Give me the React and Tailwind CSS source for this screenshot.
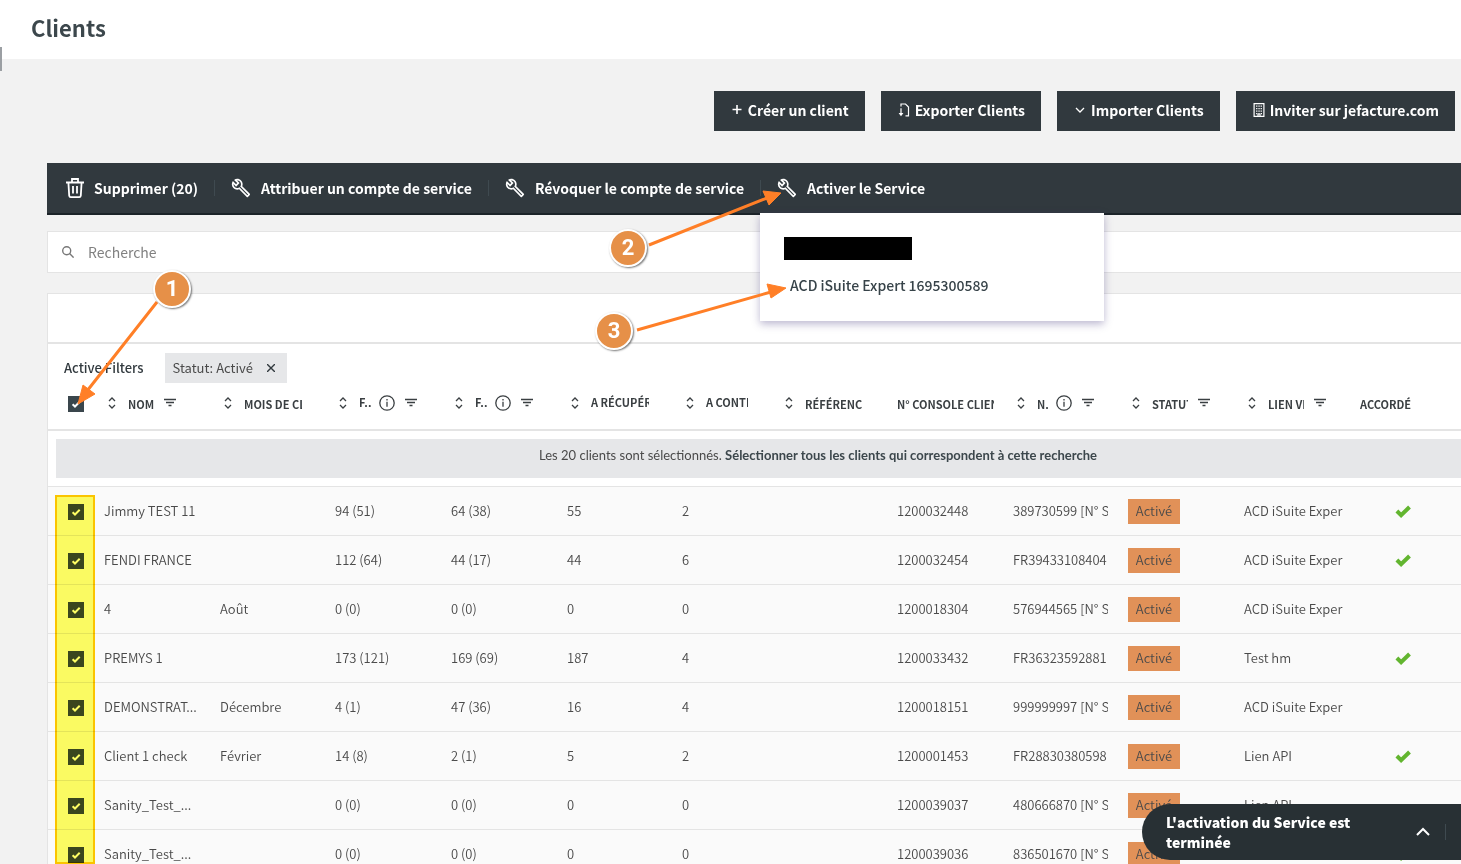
import { useState } from "react";
import { MdOutlineBuild } from "react-icons/md";

const ACCOUNT = "ACD iSuite Expert 1695300589";

const COLUMNS = [
  { id: "nom", label: "Nom", width: "w-[116px]", box: "", sort: true, filter: true },
  { id: "mois", label: "Mois de clôture", width: "w-[115px]", box: "w-[58px]", sort: true },
  { id: "f1", label: "F...", width: "w-[116px]", box: "w-3", sort: true, info: true, filter: true, raised: true },
  { id: "f2", label: "F...", width: "w-[116px]", box: "w-3", sort: true, info: true, filter: true, raised: true },
  { id: "recup", label: "A récupérer", width: "w-[115px]", box: "w-[58px]", sort: true, raised: true },
  { id: "controler", label: "A contrôler", width: "w-[99px]", box: "w-[42px]", sort: true, raised: true },
  { id: "reference", label: "Référence", width: "w-[116px]", box: "w-[58px]", sort: true },
  { id: "console", label: "N° console client", width: "w-[116px]", box: "w-[97px]" },
  { id: "numero", label: "N...", width: "w-[115px]", box: "w-[11px]", sort: true, info: true, filter: true },
  { id: "statut", label: "Statut", width: "w-[116px]", box: "w-9", sort: true, filter: true },
  { id: "lien", label: "Lien virtuel", width: "w-[116px]", box: "w-9", sort: true, filter: true },
  { id: "accorde", label: "Accordé", width: "w-[109px]", box: "" },
];

const ROWS = [
  ["Jimmy TEST 11", "", "94 (51)", "64 (38)", "55", "2", "1200032448", "389730599 [N° SIREN]", "ACD iSuite Exper", true],
  ["FENDI FRANCE", "", "112 (64)", "44 (17)", "44", "6", "1200032454", "FR39433108404", "ACD iSuite Exper", true],
  ["4", "Août", "0 (0)", "0 (0)", "0", "0", "1200018304", "576944565 [N° SIREN]", "ACD iSuite Exper", false],
  ["PREMYS 1", "", "173 (121)", "169 (69)", "187", "4", "1200033432", "FR36323592881", "Test hm", true],
  ["DEMONSTRAT...", "Décembre", "4 (1)", "47 (36)", "16", "4", "1200018151", "999999997 [N° SIREN]", "ACD iSuite Exper", false],
  ["Client 1 check", "Février", "14 (8)", "2 (1)", "5", "2", "1200001453", "FR28830380598", "Lien API", true],
  ["Sanity_Test_...", "", "0 (0)", "0 (0)", "0", "0", "1200039037", "480666870 [N° SIREN]", "Lien API", false],
  ["Sanity_Test_...", "", "0 (0)", "0 (0)", "0", "0", "1200039036", "836501670 [N° SIREN]", "Lien API", true],
];

function SortIcon() {
  return (
    <svg className="h-3 w-2 shrink-0" viewBox="0 0 8 12" fill="none" stroke="currentColor" strokeWidth="1.3">
      <path d="M1 4 4 1l3 3M1 8l3 3 3-3" />
    </svg>
  );
}

function FilterIcon() {
  return (
    <svg className="h-3 w-3 shrink-0" viewBox="0 0 12 12" fill="none" stroke="currentColor" strokeWidth="1.3">
      <path d="M0 2.5h12M2 5.5h8M4.500 8.500h3" />
    </svg>
  );
}

function InfoIcon() {
  return (
    <svg className="h-4 w-4 shrink-0" viewBox="0 0 16 16" fill="none" stroke="currentColor" strokeWidth="1.3">
      <circle cx="8" cy="8" r="7.200" />
      <path d="M8 6.800v5M8 4v1.600" />
    </svg>
  );
}

function TrashIcon() {
  return (
    <svg className="h-5 w-[18px] shrink-0" viewBox="0 0 18 20" fill="none" stroke="currentColor" strokeWidth="1.8">
      <path d="M0 4.500h18M6 4.500V1h6v3.500M2.400 4.500l.8 13.200c.1.900.6 1.400 1.500 1.400h8.600c.900 0 1.400-.5 1.500-1.400l.8-13.200M7 8v7.500M11 8v7.500" />
    </svg>
  );
}

function ExportIcon() {
  return (
    <svg className="h-3.5 w-3.5 shrink-0" viewBox="0 0 14 14" fill="none" stroke="currentColor" strokeWidth="1.200">
      <path d="M4 3.600V1h4.500l3 3v8.800H8.500M4 5.200v6.500" />
      <path d="M1.600 10h4.800L4 13.200z" fill="currentColor" stroke="none" />
    </svg>
  );
}

function BuildingIcon() {
  return (
    <svg className="h-3.5 w-3.5 shrink-0" viewBox="0 0 14 14" fill="none" stroke="currentColor" strokeWidth="1.200">
      <path d="M2.100.600h9.800v12.800H2.100zM6 13.400v-2.600h2v2.600" />
      <path d="M4.100 3.200h1.300M6.400 3.200h1.300M8.600 3.200h1.300M4.100 5.700h1.300M6.400 5.700h1.300M8.600 5.700h1.300M4.100 8.200h1.300M6.400 8.200h1.300M8.600 8.200h1.300M4.100 10.700h1M9 10.700h1" strokeWidth="1.300" />
    </svg>
  );
}

function Check({ label }) {
  return (
    <label className="relative block h-4 w-4">
      <span className="sr-only">{label}</span>
      <input type="checkbox" defaultChecked className="peer block h-4 w-4 appearance-none bg-[#3a464c]" />
      <svg className="pointer-events-none absolute inset-0 h-4 w-4 opacity-0 peer-checked:opacity-100" viewBox="0 0 16 16" fill="none" stroke="#fff" strokeWidth="2">
        <path d="M4.600 8.200 7 10.500l4.700-4.700" />
      </svg>
    </label>
  );
}

function ActionButton({ icon, children }) {
  return (
    <button type="button" className="flex h-10 items-center gap-1 bg-[#31393e] px-4 pb-0.5 text-sm leading-5 font-bold whitespace-nowrap text-white">
      {icon}
      {children}
    </button>
  );
}

function ToolbarButton({ icon, children }) {
  return (
    <button type="button" className="flex items-center gap-2.5 text-sm leading-5 font-bold whitespace-nowrap text-white">
      {icon}
      {children}
    </button>
  );
}

function Divider() {
  return <span className="h-4 w-px bg-[#3f4a50]" />;
}

function Badge({ place, children }) {
  return (
    <span className={`absolute z-20 flex h-[38px] w-[38px] items-center justify-center rounded-full border-2 border-white bg-[#e69048] font-['Roboto',sans-serif] text-[22px] leading-6 font-bold text-white shadow-[1px_1px_2px_rgba(0,0,0,0.55)] ${place}`}>
      {children}
    </span>
  );
}

function HeaderCell({ column }) {
  return (
    <th scope="col" className="h-[47px] overflow-hidden p-0 pb-1.5 pl-3 text-left font-bold">
      <div className={`flex items-center ${column.sort ? "" : "-ml-1"}`}>
        {column.sort && (
          <button type="button" aria-label={`Trier ${column.label}`} className="mr-3">
            <SortIcon />
          </button>
        )}
        <span className={`block overflow-hidden whitespace-nowrap uppercase ${column.raised ? "pb-0.5" : "pt-0.5"} ${column.box}`}>
          {column.label}
        </span>
        {column.info && (
          <span className="ml-2">
            <InfoIcon />
          </span>
        )}
        {column.filter && (
          <button type="button" aria-label={`Filtrer ${column.label}`} className="ml-2.5">
            <FilterIcon />
          </button>
        )}
      </div>
    </th>
  );
}

function Cell({ children }) {
  return (
    <td className="h-[49px] p-0 pr-2 pl-2">
      <div className="overflow-hidden whitespace-nowrap">{children}</div>
    </td>
  );
}

export default function App() {
  const [query, setQuery] = useState("");
  return (
    <div className="relative h-screen overflow-hidden bg-[#f2f2f2] font-['Noto_Sans_CJK_SC','Noto_Sans',sans-serif] text-[13px] leading-5 text-[#4a4a4a]">
      <header className="flex h-[59px] items-center bg-white px-[31px] pb-1.5">
        <h1 className="text-[22px] leading-7 font-bold text-[#3c474c]">Clients</h1>
      </header>
      <span className="absolute top-[47px] left-0 h-6 w-0.5 bg-[#9b9fa3]" />

      <main className="pt-8 pl-[47px]">
        <div className="flex justify-end gap-4 pr-1.5">
          <ActionButton
            icon={
              <svg className="h-3.5 w-3.5" viewBox="0 0 14 14" fill="none" stroke="currentColor" strokeWidth="1.600">
                <path d="M2.500 6.500h9M7 2v9" />
              </svg>
            }
          >
            Créer un client
          </ActionButton>
          <ActionButton icon={<ExportIcon />}>Exporter Clients</ActionButton>
          <ActionButton
            icon={
              <svg className="h-3.5 w-3.5" viewBox="0 0 14 14" fill="none" stroke="currentColor" strokeWidth="1.300">
                <path d="m3 5 4 4 4-4" />
              </svg>
            }
          >
            Importer Clients
          </ActionButton>
          <ActionButton icon={<BuildingIcon />}>Inviter sur jefacture.com</ActionButton>
        </div>

        <div className="mt-8 flex h-[52px] items-center gap-4 border-b-2 border-[#1c2429] bg-[#31393e] px-[19px]">
          <ToolbarButton icon={<TrashIcon />}>Supprimer (20)</ToolbarButton>
          <Divider />
          <ToolbarButton icon={<MdOutlineBuild className="h-5 w-5" />}>Attribuer un compte de service</ToolbarButton>
          <Divider />
          <ToolbarButton icon={<MdOutlineBuild className="h-5 w-5" />}>Révoquer le compte de service</ToolbarButton>
          <Divider />
          <div className="relative">
            <ToolbarButton icon={<MdOutlineBuild className="h-5 w-5" />}>Activer le Service</ToolbarButton>
            <div className="absolute top-[35px] -left-[17px] z-10 h-[108px] w-[344px] bg-white p-6 shadow-[0_3px_8px_rgba(60,50,120,0.35)]">
              <div className="h-[23px] w-32 bg-black" />
              <button type="button" className="mt-[15px] ml-1.5 block text-sm leading-5 font-medium whitespace-nowrap text-[#374349]">
                {ACCOUNT}
              </button>
            </div>
          </div>
        </div>

        <label className="mt-4 flex h-[42px] items-center gap-3.5 border border-r-0 border-[#e4e4e4] bg-white pl-3.5">
          <svg className="h-3 w-3 shrink-0" viewBox="0 0 12 12" fill="none" stroke="#777" strokeWidth="1.400">
            <circle cx="4.700" cy="4.700" r="4" />
            <path d="m7.600 7.600 4 4" />
          </svg>
          <span className="sr-only">Recherche</span>
          <input
            type="text"
            value={query}
            onChange={(event) => setQuery(event.target.value)}
            placeholder="Recherche"
            className="min-w-0 flex-1 bg-transparent text-sm leading-5 outline-none placeholder:text-[#808080]"
          />
        </label>

        <section className="mt-5 overflow-hidden border-t border-l border-[#e4e4e4] bg-white">
          <div className="h-[50px] border-b-2 border-[#e4e4e4]" />
          <div className="flex items-center gap-[21px] pt-[9px] pl-4">
            <span className="font-medium text-[#31393e]">Active Filters</span>
            <span className="flex h-[30px] items-center gap-3.5 bg-[#e6e7e9] pr-3 pl-2">
              Statut: Activé
              <button type="button" aria-label="Retirer le filtre" className="text-[#31393e]">
                <svg className="h-2 w-2" viewBox="0 0 8 8" fill="none" stroke="currentColor" strokeWidth="1.400">
                  <path d="m0 0 8 8M8 0 0 8" />
                </svg>
              </button>
            </span>
          </div>

          <table className="w-full min-w-[1544px] table-fixed border-collapse">
            <colgroup>
              <col className="w-12" />
              {COLUMNS.map((column) => (
                <col key={column.id} className={column.width} />
              ))}
              <col />
            </colgroup>
            <thead className="text-[11px] leading-4 text-[#3a3f42]">
              <tr>
                <th scope="col" className="h-[47px] p-0 pb-1 pl-5">
                  <Check label="Tout sélectionner" />
                </th>
                {COLUMNS.map((column) => (
                  <HeaderCell key={column.id} column={column} />
                ))}
                <td />
              </tr>
            </thead>
            <tbody>
              <tr className="border-t-2 border-b border-[#e4e4e4]">
                <td colSpan={14} className="py-2 pl-2">
                  <p className="h-[39px] bg-[#e6e7e9] pt-1.5 pr-3 text-center font-['Lato','Noto_Sans',sans-serif]">
                    Les 20 clients sont sélectionnés.{" "}
                    <button type="button" className="font-bold text-[#3c474c]">
                      Sélectionner tous les clients qui correspondent à cette recherche
                    </button>
                  </p>
                </td>
              </tr>
              {ROWS.map(([nom, mois, f1, f2, recup, controler, console_, numero, lien, ok]) => (
                <tr key={console_} className="border-b border-[#e4e4e4] bg-[#fafafa] font-[350]">
                  <td className="p-0 pt-0.5 pl-5">
                    <Check label={`Sélectionner ${nom}`} />
                  </td>
                  <Cell>{nom}</Cell>
                  <Cell>{mois}</Cell>
                  <Cell>{f1}</Cell>
                  <Cell>{f2}</Cell>
                  <Cell>{recup}</Cell>
                  <Cell>{controler}</Cell>
                  <Cell />
                  <Cell>{console_}</Cell>
                  <td className="h-[49px] p-0 pr-3 pl-2">
                    <div className="overflow-hidden whitespace-nowrap">{numero}</div>
                  </td>
                  <Cell>
                    <span className="block h-[25px] w-[52px] bg-[#e19158] text-center leading-6">Activé</span>
                  </Cell>
                  <Cell>{lien}</Cell>
                  <td className="p-0 pr-2">
                    {ok && (
                      <svg className="mx-auto h-4 w-4" viewBox="0 0 16 16" fill="none" stroke="#62b52f" strokeWidth="4" role="img" aria-label="Accordé">
                        <path d="m1.900 8 4.200 4.200 8.400-8.200" />
                      </svg>
                    )}
                  </td>
                  <td />
                </tr>
              ))}
            </tbody>
          </table>
        </section>
      </main>

      <div className="pointer-events-none absolute top-[495px] bottom-0 left-[55px] w-10 border-2 border-[#ffc800] bg-[#ffff64] mix-blend-multiply" />

      <svg className="pointer-events-none absolute top-0 left-0 z-20 h-[430px] w-[820px]" viewBox="0 0 820 430" fill="#ff7f27" stroke="#ff7f27">
        <path d="M157 302 87 391M649 245l118-47M637 330l134-38" strokeWidth="3" fill="none" />
        <path d="m78 404 5-19 12 9zM781 193l-18-2 6 14zM786 288l-19-4 4 14z" strokeWidth="1" />
      </svg>
      <Badge place="top-[270px] left-[153px]">1</Badge>
      <Badge place="top-[229px] left-[609px]">2</Badge>
      <Badge place="top-[312px] left-[595px]">3</Badge>

      <div role="status" className="absolute right-0 bottom-1 z-30 flex h-14 w-[319px] items-center rounded-l-full bg-[#283034] pl-6 text-white">
        <p className="w-[200px] text-sm leading-5 font-black">L'activation du Service est terminée</p>
        <button type="button" aria-label="Réduire" className="ml-[50px]">
          <svg className="h-3 w-3.5" viewBox="0 0 14 12" fill="none" stroke="currentColor" strokeWidth="2">
            <path d="m1 9 6-6 6 6" />
          </svg>
        </button>
        <span className="ml-[15px] h-4 w-px bg-[#3f4a50]" />
      </div>
    </div>
  );
}
